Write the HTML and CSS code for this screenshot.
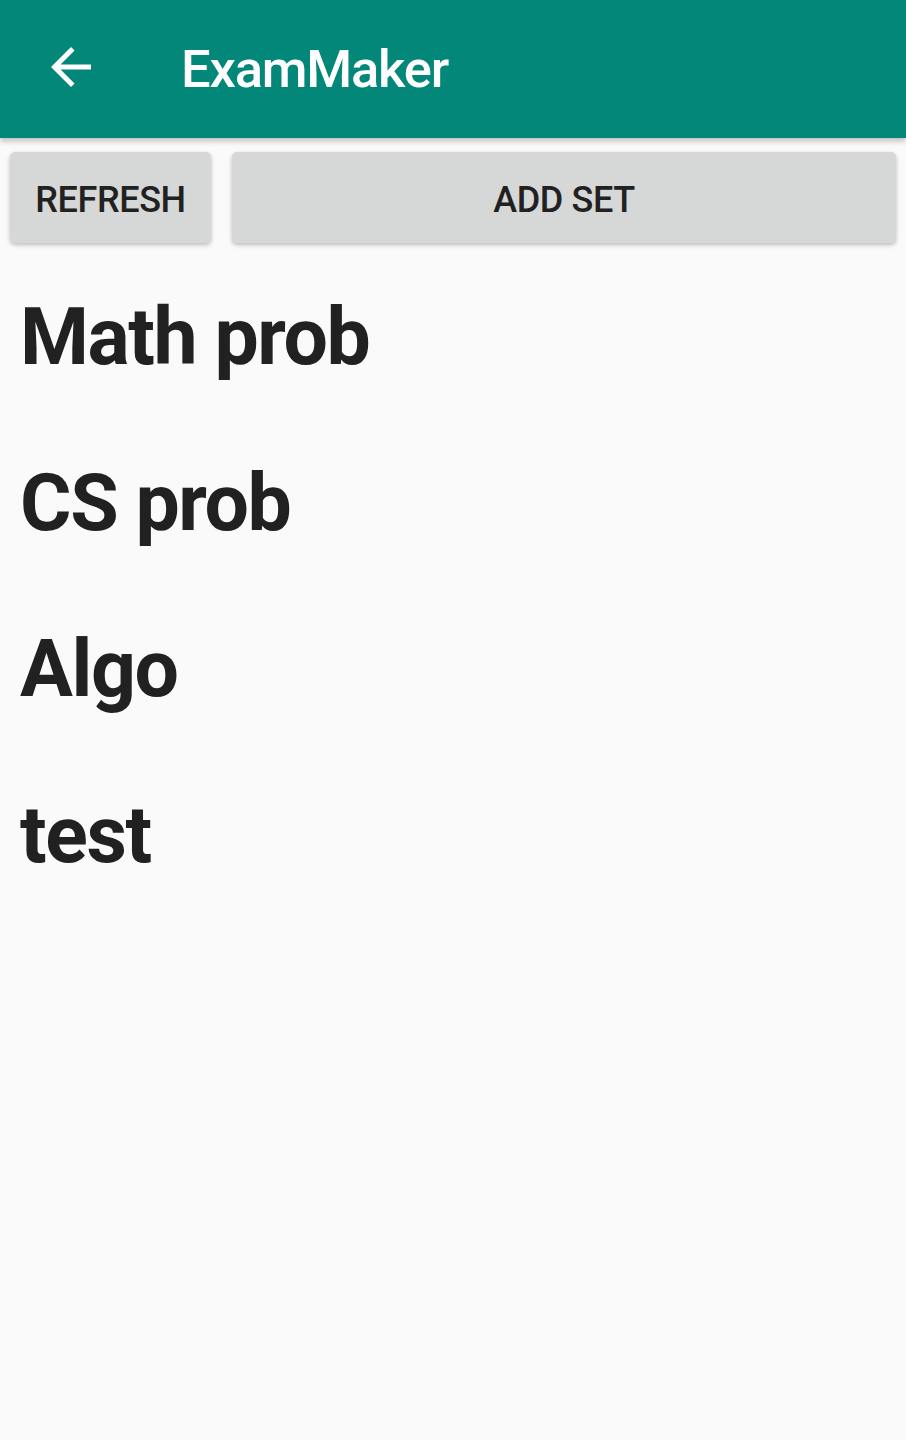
FILE: index.html
```html
<!DOCTYPE html>
<html>
<head>
<meta charset="utf-8">
<link rel="stylesheet" href="styles.css">
</head>
<body>
<header class="appbar">
  <button class="nav-btn" aria-label="Back">
    <svg viewBox="0 0 24 24" width="60" height="60"><path fill="#fff" d="M20 11H7.83l5.59-5.59L12 4l-8 8 8 8 1.41-1.41L7.83 13H20v-2z"/></svg>
  </button>
  <h1 class="title">ExamMaker</h1>
</header>
<main class="content">
  <div class="actions">
    <button class="btn btn-refresh">REFRESH</button>
    <button class="btn btn-add">ADD SET</button>
  </div>
  <ul class="sets">
    <li class="set">Math prob</li>
    <li class="set">CS prob</li>
    <li class="set">Algo</li>
    <li class="set">test</li>
  </ul>
</main>
</body>
</html>
```
FILE: styles.css
```css
html, body {
  margin: 0;
  padding: 0;
  background: #fafafa;
  font-family: Roboto, "Noto Sans", sans-serif;
}
.appbar {
  height: 138px;
  background: #028778;
  display: flex;
  align-items: center;
  box-shadow: 0 3px 6px rgba(0,0,0,0.25);
  position: relative;
  z-index: 1;
}
.nav-btn {
  background: none;
  border: 0;
  padding: 0;
  margin: 0 0 4px 41px;
  width: 60px;
  height: 60px;
  display: flex;
}
.title {
  margin: 0 0 0 80px;
  color: #fff;
  font-size: 52.5px;
  font-weight: 500;
  letter-spacing: -1.2px;
  line-height: 1;
}
.content {
  padding: 0;
}
.actions {
  display: flex;
  gap: 21px;
  padding: 14px 10px 0 10px;
}
.btn {
  height: 91px;
  border: 0;
  border-radius: 5px;
  background: #d6d7d7;
  color: #212121;
  font-family: Roboto, sans-serif;
  font-weight: 500;
  font-size: 36px;
  letter-spacing: -0.4px;
  box-shadow: 0 2px 4px rgba(0,0,0,0.25);
  padding: 4px 0 0 0;
}
.btn-refresh {
  width: 201px;
}
.btn-add {
  flex: 1;
}
.sets {
  list-style: none;
  margin: 0;
  padding: 11px 0 0 20px;
}
.set {
  height: 166px;
  line-height: 166px;
  font-size: 78.75px;
  font-weight: 700;
  letter-spacing: -1.4px;
  color: #212121;
}
```
